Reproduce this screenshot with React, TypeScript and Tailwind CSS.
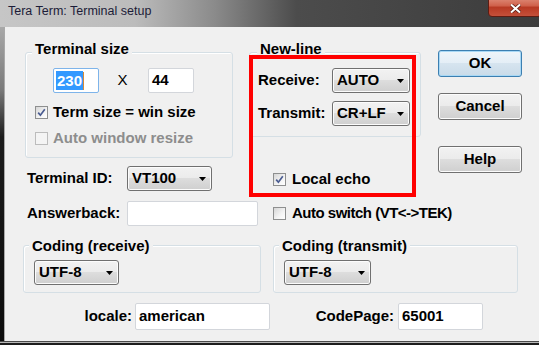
import React from 'react';

const bevel =
  'border border-[#707070] rounded-[3px] bg-[linear-gradient(180deg,#f2f2f2_0%,#ebebeb_49%,#dddddd_50%,#cfcfcf_100%)] shadow-[inset_0_0_0_1px_#fcfcfc]';

function Combo({ value, className }: { value: string; className: string }) {
  return (
    <div className={`${className} h-[25px] shrink-0 flex items-center justify-between pl-[4px] pr-[5px] font-bold ${bevel}`}>
      <span>{value}</span>
      <svg width="7" height="4" viewBox="0 0 7 4" className="mt-px">
        <path d="M0 0H7L3.5 4Z" fill="#000" />
      </svg>
    </div>
  );
}

function Check({ checked = false, disabled = false }: { checked?: boolean; disabled?: boolean }) {
  return (
    <div
      className={`w-[13px] h-[13px] shrink-0 border ${
        disabled
          ? 'border-[#bcbcbc] bg-[#f4f4f4]'
          : 'border-[#8e8f8f] bg-[linear-gradient(135deg,#d6d6d6_0%,#f4f4f4_60%,#ffffff_100%)]'
      }`}
    >
      {checked && (
        <svg width="11" height="11" viewBox="0 0 11 11">
          <path d="M2.2 5.6L4.4 8.2L8.8 2.2" fill="none" stroke="#4a5c91" strokeWidth="1.7" />
        </svg>
      )}
    </div>
  );
}

function Field({ className, children, focus = false }: { className: string; children?: React.ReactNode; focus?: boolean }) {
  return (
    <div
      className={`${className} shrink-0 flex items-center pl-[2px] bg-white border rounded-[2px] font-bold ${
        focus ? 'border-[#7eb4ea]' : 'border-[#d3d6db]'
      }`}
    >
      {children}
    </div>
  );
}

function Group({
  title,
  className,
  labelClass,
  children,
}: {
  title: string;
  className: string;
  labelClass: string;
  children: React.ReactNode;
}) {
  return (
    <div className={`border border-[#d5dfe5] rounded-[3px] shadow-[inset_1px_1px_0_#ffffff] ${className}`}>
      <div className={`w-fit px-[3px] bg-[#f0f0f0] font-bold leading-[18px] ${labelClass}`}>{title}</div>
      {children}
    </div>
  );
}

function Btn({ label, isDefault = false, className }: { label: string; isDefault?: boolean; className: string }) {
  return (
    <button
      type="button"
      className={`${className} w-[84px] h-[27px] flex items-center justify-center font-bold rounded-[3px] border ${
        isDefault
          ? 'border-[#3c7fb1] bg-[linear-gradient(180deg,#eef5fa_0%,#e4eef6_49%,#d6e4ef_50%,#c9dbe9_100%)] shadow-[inset_0_0_0_1px_#a8d8f5]'
          : 'border-[#707070] bg-[linear-gradient(180deg,#f2f2f2_0%,#ebebeb_49%,#dddddd_50%,#cfcfcf_100%)] shadow-[inset_0_0_0_1px_#fcfcfc]'
      }`}
    >
      {label}
    </button>
  );
}

export default function App() {
  return (
    <div className="w-[539px] h-[345px] overflow-hidden flex flex-col bg-[#1a1a1a] font-['Liberation_Sans',Arial,sans-serif] text-[15px] text-black">
      {/* title bar */}
      <div className="h-[27px] shrink-0 flex items-start bg-[linear-gradient(90deg,#c6c6c6_0%,#bcbcbc_25%,#8a8a8a_40%,#4c4c4c_55%,#3c3c3c_100%)]">
        <div className="pl-[8px] pt-[3px] text-[12.5px] leading-[16px] text-[#1c1c38]">Tera Term: Terminal setup</div>
        <div className="ml-auto -mr-[3px] -mt-[4px] w-[54px] h-[21px] flex items-center justify-center rounded-b-[4px] border border-[#5e1c12] bg-[linear-gradient(180deg,#e0907e_0%,#d0624c_45%,#b83a24_55%,#c4503a_100%)]">
          <svg width="11" height="9" viewBox="0 0 11 9" className="mt-[4px]">
            <path d="M1 0.5L10 8.5M10 0.5L1 8.5" stroke="#5a1a10" strokeWidth="3.4" />
            <path d="M1 0.5L10 8.5M10 0.5L1 8.5" stroke="#ffffff" strokeWidth="2" />
          </svg>
        </div>
      </div>

      <div className="flex flex-1 min-h-0">
        <div className="w-[5px] shrink-0 border-r border-[#a8a8a8] bg-[linear-gradient(180deg,#a8a8a8_0%,#7a7a7a_20%,#1c1c1c_35%,#0c0c0c_100%)]" />

        {/* client */}
        <div className="relative flex-1 bg-[#f0f0f0]">
          <div className="flex items-start">
            {/* left column */}
            <div className="ml-[20px] w-[224px] shrink-0">
              <Group title="Terminal size" className="mt-[25px] w-[208px] pb-[6px]" labelClass="-mt-[13px] ml-[6px]">
                <div className="mt-[10px] h-[25px] flex items-center">
                  <Field className="ml-[27px] w-[46px] h-[25px] pl-[1px]" focus>
                    <span className="bg-[#3399ff] text-white leading-[19px] px-px">230</span>
                    <span className="w-px h-[18px] bg-[#d98a36]" />
                  </Field>
                  <span className="ml-[18px] w-[11px] text-center">X</span>
                  <Field className="ml-[20px] w-[46px] h-[25px] pl-[3px]">44</Field>
                </div>
                <div className="mt-[6px] h-[26px] flex items-center">
                  <div className="ml-[9px]">
                    <Check checked />
                  </div>
                  <span className="ml-[5px] font-bold">Term size = win size</span>
                </div>
                <div className="h-[26px] flex items-center">
                  <div className="ml-[9px]">
                    <Check disabled />
                  </div>
                  <span className="ml-[5px] font-bold text-[#8d8d8d]">Auto window resize</span>
                </div>
              </Group>

              <div className="mt-[8px] h-[25px] flex items-center">
                <span className="ml-[2px] w-[100px] shrink-0 font-bold">Terminal ID:</span>
                <Combo value="VT100" className="w-[85px]" />
              </div>
              <div className="mt-[10px] h-[25px] flex items-center">
                <span className="ml-[2px] w-[100px] shrink-0 font-bold">Answerback:</span>
                <Field className="w-[131px] h-[25px]" />
              </div>
            </div>

            {/* middle column */}
            <div className="w-[189px] shrink-0">
              <Group title="New-line" className="mt-[25px] w-[172px] pb-[10px]" labelClass="-mt-[13px] ml-[7px]">
                <div className="mt-[10px] h-[25px] flex items-center">
                  <span className="ml-[8px] w-[74px] shrink-0 font-bold">Receive:</span>
                  <Combo value="AUTO" className="w-[78px]" />
                </div>
                <div className="mt-[8px] h-[25px] flex items-center">
                  <span className="ml-[8px] w-[74px] shrink-0 font-bold">Transmit:</span>
                  <Combo value="CR+LF" className="w-[78px]" />
                </div>
              </Group>
              <div className="mt-[29px] h-[26px] flex items-center">
                <div className="ml-[24px]">
                  <Check checked />
                </div>
                <span className="ml-[6px] font-bold">Local echo</span>
              </div>
              <div className="mt-[8px] h-[26px] flex items-center whitespace-nowrap">
                <div className="ml-[24px]">
                  <Check />
                </div>
                <span className="ml-[6px] font-bold tracking-[-0.5px]">Auto switch (VT&lt;-&gt;TEK)</span>
              </div>
            </div>

            {/* buttons */}
            <div className="flex flex-col shrink-0">
              <Btn label="OK" isDefault className="mt-[23px]" />
              <Btn label="Cancel" className="mt-[16px]" />
              <Btn label="Help" className="mt-[26px]" />
            </div>
          </div>

          {/* coding */}
          <div className="flex items-start">
            <Group title="Coding (receive)" className="ml-[18px] mt-[19px] w-[238px] pb-[7px]" labelClass="-mt-[9px] ml-[5px]">
              <Combo value="UTF-8" className="mt-[5px] ml-[10px] w-[85px]" />
            </Group>
            <Group title="Coding (transmit)" className="ml-[12px] mt-[19px] w-[245px] pb-[7px]" labelClass="-mt-[9px] ml-[5px]">
              <Combo value="UTF-8" className="mt-[5px] ml-[10px] w-[87px]" />
            </Group>
          </div>

          <div className="mt-[10px] h-[27px] flex items-center">
            <span className="w-[127px] shrink-0 text-right font-bold">locale:</span>
            <Field className="ml-[3px] w-[135px] h-[27px] pl-[3px]">american</Field>
            <span className="w-[124px] shrink-0 text-right font-bold">CodePage:</span>
            <Field className="ml-[4px] w-[85px] h-[27px] pl-[3px]">65001</Field>
          </div>

          {/* annotation */}
          <div className="absolute left-[244px] top-[28px] w-[167px] h-[142px] border-4 border-[#ff0000]" />
        </div>
      </div>

      <div className="h-[4px] shrink-0 border-t border-[#4a4a4a] bg-[linear-gradient(180deg,#b8b8b8_0%,#b8b8b8_33%,#1e1e1e_34%,#1e1e1e_100%)]" />
    </div>
  );
}
